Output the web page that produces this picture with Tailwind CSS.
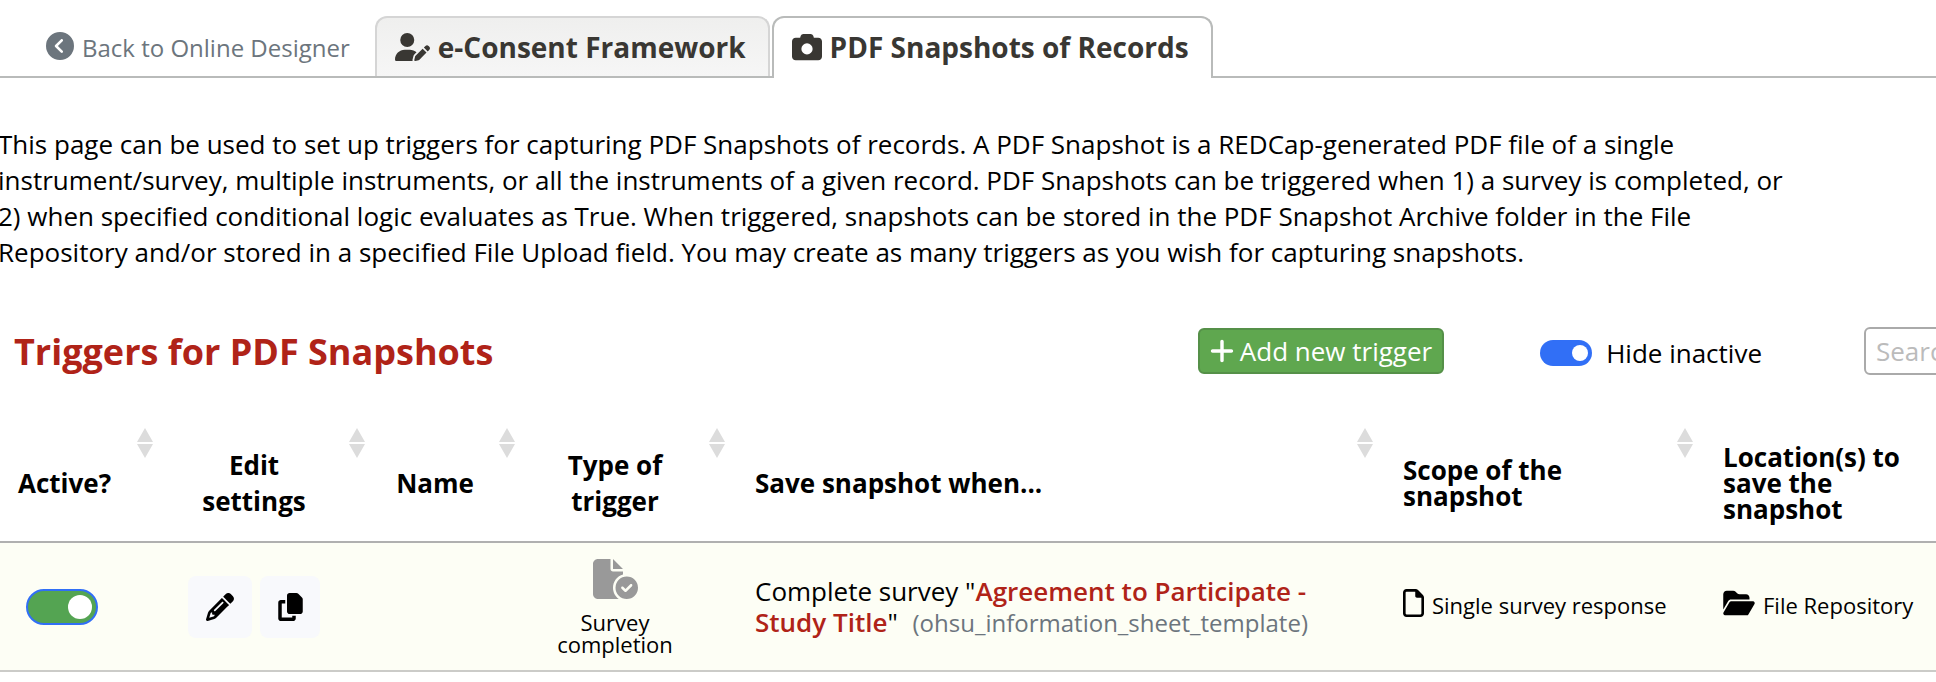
<!DOCTYPE html>
<html lang="en">
<head>
<meta charset="UTF-8" />
<meta name="viewport" content="width=device-width, initial-scale=1" />
<title>PDF Snapshots of Records</title>
<script src="https://cdn.jsdelivr.net/npm/@tailwindcss/browser@4"></script>
</head>
<body class="bg-white text-black font-['Open_Sans',sans-serif] text-[26px] leading-[36px] overflow-x-hidden">

<!-- Tabs -->
<nav class="flex items-end h-[78px] border-b-2 border-[#b9bbba]">
  <a href="#" class="flex items-start gap-2 ml-[46px] mr-[25px] h-[46px] text-2xl leading-[36px] text-[#6c757d]">
    <svg class="size-7 mt-[2px]" viewBox="0 0 512 512" fill="currentColor"><path d="M512 256A256 256 0 1 0 0 256a256 256 0 1 0 512 0zM271 135c9.4-9.4 24.6-9.4 33.9 0s9.4 24.6 0 33.9l-87 87 87 87c9.4 9.4 9.4 24.6 0 33.9s-24.6 9.4-33.9 0L167 273c-9.4-9.4-9.4-24.6 0-33.9L271 135z"/></svg>
    Back to Online Designer
  </a>
  <a href="#" class="flex items-center gap-2 h-[60px] pl-[18px] pr-[22px] mr-[2px] rounded-t-xl border-2 border-b-0 border-[#d5d5d5] bg-linear-to-b from-[#efefee] to-[#f6f6f6] text-[28px] font-bold text-[#393733]">
    <svg class="w-[35px] h-7" viewBox="0 0 640 512" fill="currentColor"><path d="M224 256A128 128 0 1 0 224 0a128 128 0 1 0 0 256zm-45.7 48C79.8 304 0 383.8 0 482.3C0 498.7 13.3 512 29.7 512H322.8c-3.1-8.8-3.7-18.4-1.4-27.8l15-60.1c2.8-11.3 8.6-21.5 16.8-29.7l40.3-40.3c-32.1-31-75.7-50.1-123.9-50.1H178.3zm435.5-68.3c-15.6-15.6-40.9-15.6-56.6 0l-29.4 29.4 71 71 29.4-29.4c15.6-15.6 15.6-40.9 0-56.6l-14.4-14.4zM375.9 417c-4.1 4.1-7 9.2-8.4 14.9l-15 60.1c-1.4 5.5 .2 11.2 4.2 15.2s9.7 5.6 15.2 4.2l60.1-15c5.6-1.4 10.8-4.3 14.9-8.4L576.1 358.7l-71-71L375.9 417z"/></svg>
    e-Consent Framework
  </a>
  <a href="#" aria-current="page" class="flex items-center gap-2 h-[62px] -mb-[2px] pl-[18px] pr-[22px] pb-[2px] rounded-t-xl border-2 border-b-0 border-[#b9bbba] bg-white text-[28px] font-bold text-[#393733]">
    <svg class="w-[30px] h-[30px]" viewBox="0 0 512 512" fill="currentColor"><path d="M149.1 64.8L138.7 96H64C28.7 96 0 124.7 0 160V416c0 35.3 28.7 64 64 64H448c35.3 0 64-28.7 64-64V160c0-35.3-28.7-64-64-64H373.3L362.9 64.8C356.4 45.2 338.1 32 317.4 32H194.6c-20.7 0-39 13.2-45.5 32.8zM256 192a96 96 0 1 1 0 192 96 96 0 1 1 0-192z"/></svg>
    PDF Snapshots of Records
  </a>
</nav>

<main>
  <p class="max-w-[1800px] mt-12 -ml-[2px]">This page can be used to set up triggers for capturing PDF Snapshots of records. A PDF Snapshot is a REDCap-generated PDF file of a single instrument/survey, multiple instruments, or all the instruments of a given record. PDF Snapshots can be triggered when 1) a survey is completed, or 2) when specified conditional logic evaluates as True. When triggered, snapshots can be stored in the PDF Snapshot Archive folder in the File Repository and/or stored in a specified File Upload field. You may create as many triggers as you wish for capturing snapshots.</p>

  <!-- Toolbar -->
  <div class="flex items-center mt-[56px] pl-[14px]">
    <h1 class="flex-1 pt-[2px] text-[36px] leading-[48px] font-bold text-[#b02318]">Triggers for PDF Snapshots</h1>
    <button type="button" class="flex items-center gap-[6px] h-[46px] px-[10px] mr-[96px] rounded-md border-2 border-[#559048] bg-[#5fa74f] text-white">
      <svg class="w-6 h-7" viewBox="0 0 448 512" fill="currentColor"><path d="M256 80c0-17.7-14.3-32-32-32s-32 14.3-32 32V224H48c-17.7 0-32 14.3-32 32s14.3 32 32 32H192V432c0 17.7 14.3 32 32 32s32-14.3 32-32V288H400c17.7 0 32-14.3 32-32s-14.3-32-32-32H256V80z"/></svg>
      Add new trigger
    </button>
    <div class="flex items-center gap-[14px] mr-[102px] pt-1">
      <input type="checkbox" id="hideInactive" role="switch" checked class="appearance-none flex items-center justify-end w-[52px] h-[26px] px-1 rounded-full bg-[#316ff6] before:content-[''] before:size-4 before:rounded-full before:bg-white" />
      <label for="hideInactive">Hide inactive</label>
    </div>
    <div class="w-[72px] overflow-hidden">
      <input type="search" aria-label="Search" placeholder="Search" class="block w-[300px] h-12 px-[10px] rounded-md border-2 border-[#aaa] placeholder:text-[#bbb]" />
    </div>
  </div>

  <!-- Triggers table -->
  <table class="w-full mt-12 table-fixed border-collapse">
    <colgroup>
      <col class="w-[163px]" />
      <col class="w-[212px]" />
      <col class="w-[150px]" />
      <col class="w-[210px]" />
      <col />
      <col class="w-[320px]" />
      <col class="w-[233px]" />
    </colgroup>
    <thead>
      <tr class="h-[118px] border-b-2 border-[#b0b0b0]">
        <th class="relative pl-[18px] pr-[52px]">Active?
          <button type="button" aria-label="Sort by Active" class="absolute top-1 right-[10px]"><svg class="w-4 h-[30px]" viewBox="0 0 16 30" fill="#dcdcdc"><path d="M8 0l8 14H0zM8 30l8-14H0z"/></svg></button>
        </th>
        <th class="relative pl-5 pr-[50px]">Edit settings
          <button type="button" aria-label="Sort by Edit settings" class="absolute top-1 right-[10px]"><svg class="w-4 h-[30px]" viewBox="0 0 16 30" fill="#dcdcdc"><path d="M8 0l8 14H0zM8 30l8-14H0z"/></svg></button>
        </th>
        <th class="relative pl-5 pr-[50px]">Name
          <button type="button" aria-label="Sort by Name" class="absolute top-1 right-[10px]"><svg class="w-4 h-[30px]" viewBox="0 0 16 30" fill="#dcdcdc"><path d="M8 0l8 14H0zM8 30l8-14H0z"/></svg></button>
        </th>
        <th class="relative pl-5 pr-[50px]">Type of trigger
          <button type="button" aria-label="Sort by Type of trigger" class="absolute top-1 right-[10px]"><svg class="w-4 h-[30px]" viewBox="0 0 16 30" fill="#dcdcdc"><path d="M8 0l8 14H0zM8 30l8-14H0z"/></svg></button>
        </th>
        <th class="relative pl-5 pr-[50px] text-left">Save snapshot when...
          <button type="button" aria-label="Sort by Save snapshot when" class="absolute top-1 right-[10px]"><svg class="w-4 h-[30px]" viewBox="0 0 16 30" fill="#dcdcdc"><path d="M8 0l8 14H0zM8 30l8-14H0z"/></svg></button>
        </th>
        <th class="relative pl-5 pr-[50px] text-left leading-[26px]">Scope of the snapshot
          <button type="button" aria-label="Sort by Scope" class="absolute top-1 right-[10px]"><svg class="w-4 h-[30px]" viewBox="0 0 16 30" fill="#dcdcdc"><path d="M8 0l8 14H0zM8 30l8-14H0z"/></svg></button>
        </th>
        <th class="pl-5 pr-6 text-left leading-[26px]">Location(s) to save the snapshot</th>
      </tr>
    </thead>
    <tbody>
      <tr class="h-[129px] border-b-2 border-[#cbcbc8] bg-[#fdfef5]">
        <td class="pl-[26px]">
          <input type="checkbox" role="switch" aria-label="Active" checked class="appearance-none flex items-center justify-end w-[72px] h-9 px-1 rounded-full border-2 border-[#316ff6] bg-[#54a452] before:content-[''] before:size-6 before:rounded-full before:bg-white" />
        </td>
        <td class="pl-5 pr-[50px]">
          <div class="flex justify-center gap-2">
            <button type="button" aria-label="Edit" class="flex items-center justify-center w-16 h-[62px] shrink-0 rounded-lg bg-[#f8f9fc]"><svg class="size-7" viewBox="0 0 512 512" fill="currentColor"><path d="M410.3 231l11.3-11.3-33.9-33.9-62.1-62.1L291.7 89.8l-11.3 11.3-22.6 22.6L58.6 322.9c-10.4 10.4-18 23.3-22.2 37.4L1 480.7c-2.5 8.4-.2 17.5 6.1 23.7s15.3 8.5 23.7 6.1l120.3-35.4c14.1-4.2 27-11.8 37.4-22.2L387.7 253.7 410.3 231zM160 399.4l-9.1 22.7c-4 3.1-8.5 5.4-13.3 6.9L59.4 452l23-78.1c1.4-4.9 3.8-9.4 6.9-13.3l22.7-9.1v32c0 8.8 7.2 16 16 16h32zM362.7 18.7L348.3 33.2 325.7 55.8 314.3 67.1l33.9 33.9 62.1 62.1 33.9 33.9 11.3-11.3 22.6-22.6 14.5-14.5c25-25 25-65.5 0-90.5L453.3 18.7c-25-25-65.5-25-90.5 0zm-47.4 168l-144 144c-6.2 6.2-16.4 6.2-22.6 0s-6.2-16.4 0-22.6l144-144c6.2-6.2 16.4-6.2 22.6 0s6.2 16.4 0 22.6z"/></svg></button>
            <button type="button" aria-label="Copy" class="flex items-center justify-center w-[60px] h-[62px] shrink-0 rounded-lg bg-[#f8f9fc]"><svg class="w-[25px] h-7" viewBox="0 0 448 512" fill="currentColor"><path d="M208 0H332.1c12.7 0 24.9 5.1 33.9 14.1l67.9 67.9c9 9 14.1 21.2 14.1 33.9V336c0 26.5-21.5 48-48 48H208c-26.5 0-48-21.5-48-48V48c0-26.5 21.5-48 48-48zM48 128h80v64H64V448H256V416h64v48c0 26.5-21.5 48-48 48H48c-26.5 0-48-21.5-48-48V176c0-26.5 21.5-48 48-48z"/></svg></button>
          </div>
        </td>
        <td></td>
        <td class="pl-5 pr-[50px] text-center text-[22px] leading-[22px]">
          <svg class="w-[45px] h-10 mx-auto mb-3" viewBox="0 0 576 512" fill="#999"><path d="M0 64C0 28.7 28.7 0 64 0H224V128c0 17.7 14.3 32 32 32H384v38.6C310.1 219.5 256 287.4 256 368c0 59.1 29.1 111.3 73.7 143.3c-3.2 .5-6.4 .7-9.7 .7H64c-35.3 0-64-28.7-64-64V64zm384 64H256V0L384 128zM288 368a144 144 0 1 1 288 0 144 144 0 1 1 -288 0zm211.3-43.3c-6.2-6.2-16.4-6.2-22.6 0L416 385.4l-28.7-28.7c-6.2-6.2-16.4-6.2-22.6 0s-6.2 16.4 0 22.6l40 40c6.2 6.2 16.4 6.2 22.6 0l72-72c6.2-6.2 6.2-16.4 0-22.6z"/></svg>
          Survey completion
        </td>
        <td class="pl-5 pr-[50px] leading-[31px]">Complete survey "<span class="font-semibold text-[#b02318]">Agreement to Participate - Study Title</span>" <span class="ml-2 text-2xl leading-[31px] text-[#6c757d]">(ohsu_information_sheet_template)</span></td>
        <td class="pl-5">
          <div class="flex items-center gap-2 pb-1 text-[22px] whitespace-nowrap">
            <svg class="w-[21px] h-7 mb-1" viewBox="0 0 384 512" fill="currentColor"><path d="M320 464c8.8 0 16-7.2 16-16V160H256c-17.7 0-32-14.3-32-32V48H64c-8.8 0-16 7.2-16 16V448c0 8.8 7.2 16 16 16H320zM0 64C0 28.7 28.7 0 64 0H229.5c17 0 33.3 6.7 45.3 18.7l90.5 90.5c12 12 18.7 28.3 18.7 45.3V448c0 35.3-28.7 64-64 64H64c-35.3 0-64-28.7-64-64V64z"/></svg>
            Single survey response
          </div>
        </td>
        <td class="pl-5">
          <div class="flex items-center gap-2 pb-1 text-[22px] whitespace-nowrap">
            <svg class="w-8 h-7 mb-1" viewBox="0 0 576 512" fill="currentColor"><path d="M88.7 223.8L0 375.8V96C0 60.7 28.7 32 64 32H181.5c17 0 33.3 6.7 45.3 18.7l26.5 26.5c12 12 28.3 18.7 45.3 18.7H416c35.3 0 64 28.7 64 64v32H144c-22.8 0-43.8 12.1-55.3 31.8zm27.6 16.1C122.1 230 132.6 224 144 224H544c11.5 0 22 6.1 27.7 16.1s5.7 22.2-.1 32.1l-112 192C453.9 474 443.4 480 432 480H32c-11.5 0-22-6.1-27.7-16.1s-5.7-22.2 .1-32.1l112-192z"/></svg>
            File Repository
          </div>
        </td>
      </tr>
    </tbody>
  </table>
</main>

</body>
</html>
